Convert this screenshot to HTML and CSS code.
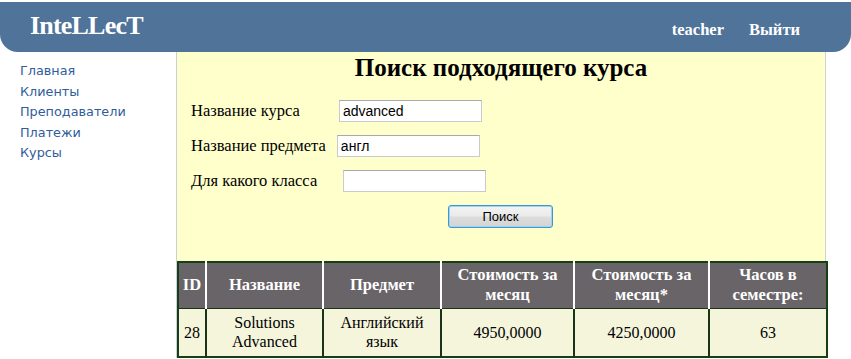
FILE: index.html
```html
<!DOCTYPE html>
<html lang="ru">
<head>
<meta charset="utf-8">
<title>InteLLecT</title>
<link rel="stylesheet" href="styles.css">
</head>
<body>
<header class="topbar">
  <div class="logo">InteLLecT</div>
  <nav class="user">
    <a href="#" class="user-link">teacher</a>
    <a href="#" class="user-link">Выйти</a>
  </nav>
</header>
<div class="layout">
  <aside class="sidebar">
    <a href="#">Главная</a>
    <a href="#">Клиенты</a>
    <a href="#">Преподаватели</a>
    <a href="#">Платежи</a>
    <a href="#">Курсы</a>
  </aside>
  <main class="panel">
    <h1 class="title">Поиск подходящего курса</h1>
    <form class="search">
      <div class="row row1"><label>Название курса</label><input type="text" value="advanced"></div>
      <div class="row row2"><label>Название предмета</label><input type="text" value="англ"></div>
      <div class="row row3"><label>Для какого класса</label><input type="text" value=""></div>
      <div class="actions"><button type="button">Поиск</button></div>
    </form>
    <table class="results">
      <colgroup>
        <col class="c-id"><col class="c-name"><col class="c-subj"><col class="c-cost"><col class="c-cost2"><col class="c-hours">
      </colgroup>
      <thead>
        <tr><th>ID</th><th>Название</th><th>Предмет</th><th>Стоимость за месяц</th><th>Стоимость за месяц*</th><th>Часов в семестре:</th></tr>
      </thead>
      <tbody>
        <tr><td>28</td><td>Solutions Advanced</td><td>Английский язык</td><td>4950,0000</td><td>4250,0000</td><td>63</td></tr>
      </tbody>
    </table>
  </main>
</div>
</body>
</html>
```
FILE: styles.css
```css
* { box-sizing: border-box; }
html, body { margin: 0; padding: 0; background: #ffffff; }
body { padding-top: 2px; font-family: "Liberation Serif", "Times New Roman", serif; }

.topbar {
  height: 50px;
  background: #4f7399;
  border-radius: 0 0 18px 18px;
  display: flex;
  align-items: center;
  justify-content: space-between;
  padding: 0 51px 0 30px;
}
.logo {
  color: #fff;
  font-weight: bold;
  font-size: 26px;
  letter-spacing: -0.8px;
  font-family: "Liberation Serif", serif;
  margin-top: -3px;
}
.user { display: flex; gap: 25px; margin-top: 5px; }
.user-link {
  color: #fff;
  text-decoration: none;
  font-weight: bold;
  font-size: 16.5px;
}

.layout { display: flex; }
.sidebar {
  width: 176px;
  padding: 9px 0 0 20px;
  display: flex;
  flex-direction: column;
}
.sidebar a {
  font-family: "DejaVu Sans", Verdana, sans-serif;
  font-size: 12.8px;
  line-height: 20.5px;
  color: #2f5d9c;
  text-decoration: none;
}

.panel {
  width: 650px;
  background: #ffffcc;
  border-left: 1px solid #c9cddc;
  border-right: 1px solid #d0d0d0;
  padding-top: 1px;
}
.title {
  margin: 1px 0 0;
  text-align: center;
  font-size: 25px;
  font-weight: bold;
  line-height: 28px;
}
.search { padding: 18px 0 0 14px; }
.row {
  display: flex;
  align-items: center;
  height: 22px;
  margin-bottom: 12.5px;
  font-size: 16.5px;
}
.row label { color: #000; }
.row input {
  height: 22px;
  width: 143px;
  border: 1px solid #c9cacd;
  border-top-color: #a7a9ad;
  background: #fff;
  font-family: "Liberation Sans", Arial, sans-serif;
  font-size: 14px;
  padding: 0 3px;
}
.row1 input { margin-left: 39px; }
.row2 input { margin-left: 11px; }
.row3 input { margin-left: 26px; }
.row2 { margin-bottom: 13px; }
.actions { padding: 1px 0 0 257px; }
.actions button {
  width: 105px;
  height: 23px;
  border: 1px solid #3a9ad0;
  border-radius: 3px;
  background: linear-gradient(#f3f3f3 0%, #ebebeb 45%, #dcdcdc 55%, #d4d4d4 100%);
  box-shadow: inset 0 0 0 1px #9fd3ef;
  font-family: "Liberation Sans", Arial, sans-serif;
  font-size: 13px;
  color: #000;
  padding: 0;
}

.results {
  margin-top: 33px;
  width: 649px;
  border-collapse: collapse;
  table-layout: fixed;
  border: 2px solid #163f16;
}
.c-id { width: 28px; }
.c-name { width: 117px; }
.c-subj { width: 118px; }
.c-cost { width: 133px; }
.c-cost2 { width: 135px; }
.c-hours { width: 118px; }
.results th {
  background: #686468;
  color: #fff;
  font-size: 16.5px;
  font-weight: bold;
  line-height: 20px;
  height: 46px;
  padding: 0 4px;
  border-left: 2px solid #ffffff;
  text-align: center;
}
.results th:first-child { border-left: none; padding: 0; }
.results td {
  background: #f5f5dc;
  font-size: 16px;
  line-height: 19px;
  height: 49px;
  text-align: center;
  border-left: 2px solid #1b321b;
  border-top: 1px solid #1b321b;
  padding: 0 4px;
}
.results td:first-child { border-left: none; padding: 0; }
```
